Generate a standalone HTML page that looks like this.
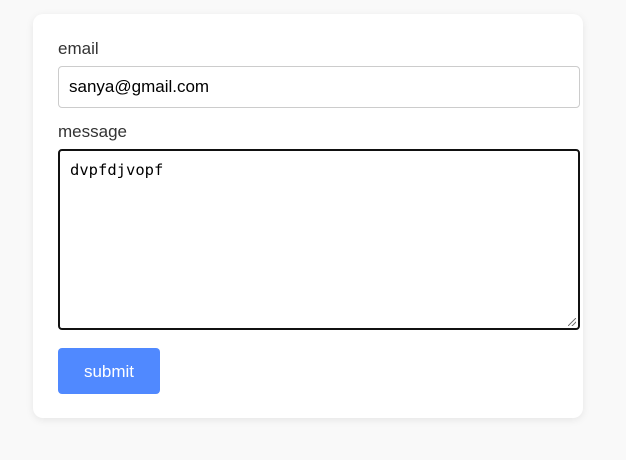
<!DOCTYPE html>
<html><head><style>
html,body{margin:0;padding:0;background:#f9f9f9;width:626px;height:460px;overflow:hidden;font-family:"Liberation Sans",Arial,sans-serif;}
.card{position:absolute;left:33px;top:14px;width:550px;height:404px;background:#fff;border-radius:10px;box-shadow:0 2px 8px rgba(0,0,0,0.08);}
.lbl{position:absolute;left:25px;font-size:17px;color:#333;}
.in{position:absolute;left:25px;top:52px;height:40px;border:1px solid #ccc;border-radius:4px;box-sizing:content-box;font-size:17px;line-height:40px;padding-left:10px;width:510px;color:#000;}
.ta{position:absolute;left:25px;top:135px;border:2px solid #111;border-radius:4px;font-family:"DejaVu Sans Mono","Liberation Mono",monospace;font-size:15.5px;padding:10px 10px;box-sizing:border-box;width:522px;height:181px;color:#000;}
.rs{position:absolute;right:2px;bottom:2px;width:8px;height:8px;background:linear-gradient(135deg,transparent 45%,#777 45%,#777 55%,transparent 55%,transparent 70%,#777 70%,#777 80%,transparent 80%);}
.btn{position:absolute;left:25px;top:334px;width:102px;height:46px;background:#5089ff;border-radius:4px;color:#fff;font-size:17px;text-align:center;line-height:47px;}
</style></head><body>
<div class="card">
<div class="lbl" style="top:25px">email</div>
<div class="in">sanya@gmail.com</div>
<div class="lbl" style="top:108px">message</div>
<div class="ta">dvpfdjvopf<div class="rs"></div></div>
<div class="btn">submit</div>
</div>
</body></html>
